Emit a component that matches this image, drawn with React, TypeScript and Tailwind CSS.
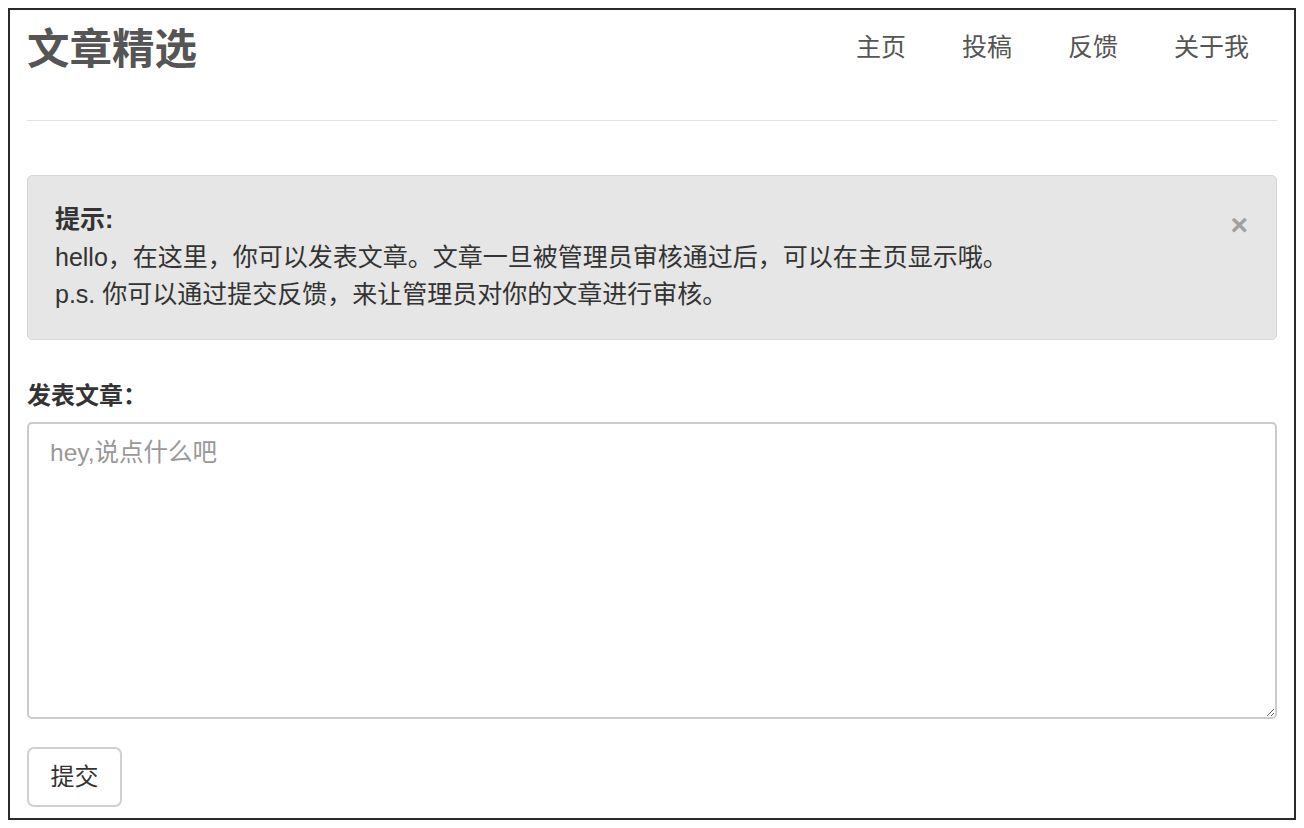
const FONT = "font-['Liberation_Sans','Noto_Sans_CJK_SC',sans-serif]";

const NAV = ['主页', '投稿', '反馈', '关于我'];

export default function App() {
    return (
        <div className={'h-[828px] w-[1304px] bg-white p-2 ' + FONT}>
            <div className="h-full border-2 border-[#2a2a2a] px-[17px]">
                {/* header */}
                <div className="flex h-[111px] items-start justify-between border-b border-[#e3e3e3] pt-[15px]">
                    <h1 className="text-[42.5px] font-bold leading-[50px] text-[#555]">文章精选</h1>
                    <nav className="flex pt-[5px]">
                        {NAV.map((n, i) => (
                            <a
                                key={n}
                                href="#"
                                className={
                                    'text-[25px] leading-[34px] text-[#555] ' +
                                    (i === NAV.length - 1 ? 'pl-[28px] pr-[28px]' : 'px-[28px]')
                                }
                            >
                                {n}
                            </a>
                        ))}
                    </nav>
                </div>

                {/* alert */}
                <div className="relative mt-[54px] rounded-[5px] border border-[#d6d6d6] bg-[#e6e6e6] px-[27px] py-[25px] text-[25px] leading-[37.5px] text-[#333]">
                    <button className="absolute right-[28px] top-[32px] text-[30px] font-bold leading-[34px] text-[#a0a0a0]">
                        ×
                    </button>
                    <p className="font-bold">提示:</p>
                    <p>hello，在这里，你可以发表文章。文章一旦被管理员审核通过后，可以在主页显示哦。</p>
                    <p>p.s. 你可以通过提交反馈，来让管理员对你的文章进行审核。</p>
                </div>

                {/* form */}
                <label className="mt-[41px] block text-[24px] font-bold leading-[30px] text-[#333]">发表文章：</label>
                <textarea
                    placeholder="hey,说点什么吧"
                    className="mt-[11px] block h-[297px] w-full resize-y rounded-[5px] border-2 border-[#cbcbcb] px-[21px] py-[14px] text-[24.5px] leading-[30px] text-[#333] placeholder:text-[#999] focus:outline-none"
                />
                <button className="mt-[28px] h-[60px] w-[95px] rounded-[7px] border-2 border-[#d0d0d0] bg-white text-[24px] text-[#333]">
                    提交
                </button>
            </div>
        </div>
    );
}
